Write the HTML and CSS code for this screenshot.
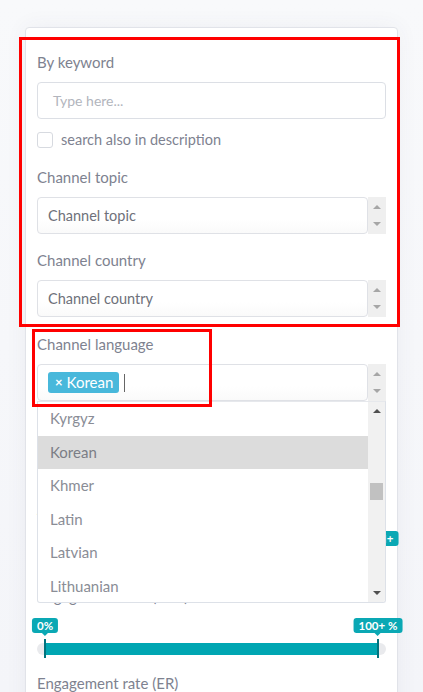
FILE: index.html
```html
<!DOCTYPE html>
<html lang="en">
<head>
<meta charset="utf-8">
<title>Channel filters</title>
<link rel="stylesheet" href="styles.css">
</head>
<body>
<div class="page">
  <div class="card">
    <div class="field kw">
      <div class="label">By keyword</div>
      <div class="input">Type here...</div>
      <div class="check"><span class="box"></span><span class="check-text">search also in description</span></div>
    </div>

    <div class="field">
      <div class="label">Channel topic</div>
      <div class="select">
        <div class="select-body">Channel topic</div>
        <div class="spin"><span class="arr up"></span><span class="arr down"></span></div>
      </div>
    </div>

    <div class="field">
      <div class="label">Channel country</div>
      <div class="select">
        <div class="select-body">Channel country</div>
        <div class="spin"><span class="arr up"></span><span class="arr down"></span></div>
      </div>
    </div>

    <div class="field lang">
      <div class="label">Channel language</div>
      <div class="select-wrap">
        <div class="select">
          <div class="select-body"><span class="tag"><span class="x">×</span> Korean</span><span class="caret"></span></div>
          <div class="spin"><span class="arr up"></span><span class="arr down"></span></div>
        </div>
        <div class="dropdown">
          <ul class="options">
            <li>Kyrgyz</li>
            <li class="active">Korean</li>
            <li>Khmer</li>
            <li>Latin</li>
            <li>Latvian</li>
            <li>Lithuanian</li>
          </ul>
          <div class="scrollbar">
            <span class="sarr sup"></span>
            <span class="thumb"></span>
            <span class="sarr sdown"></span>
          </div>
        </div>
      </div>
    </div>

    <div class="field">
      <div class="label">Channel category</div>
      <div class="select">
        <div class="select-body">Channel category</div>
        <div class="spin"><span class="arr up"></span><span class="arr down"></span></div>
      </div>
    </div>

    <div class="slider-sec">
      <div class="label">Average views</div>
      <div class="tips"><span class="tip" style="left:6%">1K</span><span class="tip" style="left:97.7%">10M+</span></div>
      <div class="track"><span class="fill" style="left:6%;right:2.3%"></span><span class="handle" style="left:6%"></span><span class="handle" style="left:97.7%"></span></div>
    </div>

    <div class="slider-sec">
      <div class="label">Engagement rate (ERV)</div>
      <div class="tips"><span class="tip" style="left:2.3%">0%</span><span class="tip" style="left:97.7%">100+ %</span></div>
      <div class="track"><span class="fill" style="left:2.3%;right:2.3%"></span><span class="handle" style="left:2.3%"></span><span class="handle" style="left:97.7%"></span></div>
    </div>

    <div class="slider-sec">
      <div class="label">Engagement rate (ER)</div>
    </div>
  </div>

  <div class="mark mark-a"></div>
  <div class="mark mark-b"></div>
</div>
</body>
</html>
```

FILE: styles.css
```css
* { box-sizing: border-box; }
html, body { margin: 0; padding: 0; }
body {
  background: #f4f5f9;
  font-family: "Lato", "Noto Sans", sans-serif;
  height: 692px;
  overflow: hidden;
}
.page {
  position: relative;
  padding: 27px 26px 0 25px;
  height: 692px;
  background: linear-gradient(180deg, #f8f9fb 0%, #f4f5f9 100%);
}
.card {
  width: 373px;
  background: #fff;
  border: 1px solid #e1e3e9;
  border-radius: 4px;
  padding: 24px 11px 40px 11px;
  box-shadow: 0 0 22px rgba(60, 70, 110, 0.06);
}
.label {
  font-size: 15px;
  line-height: 20px;
  height: 20px;
  color: #7e8290;
  margin-bottom: 10px;
  white-space: nowrap;
}
.field + .field { margin-top: 16px; }
.field.lang { margin-top: 17px; }
.kw { padding-bottom: 3px; }

.input {
  height: 37px;
  border: 1px solid #dcdfe5;
  border-radius: 4px;
  padding: 0 15px;
  font-size: 14px;
  line-height: 35px;
  color: #b2b5bd;
}
.check {
  margin-top: 13px;
  display: flex;
  align-items: center;
  gap: 8px;
  height: 16px;
}
.box {
  width: 16px;
  height: 16px;
  border: 1px solid #d7dae0;
  border-radius: 3px;
  background: #fff;
}
.check-text {
  font-size: 14.5px;
  color: #7e8290;
  line-height: 16px;
}

.select {
  display: flex;
  height: 37px;
}
.select-body {
  flex: 1;
  border: 1px solid #dfe1e6;
  border-radius: 4px;
  padding: 0 10px;
  font-size: 14.5px;
  line-height: 35px;
  color: #6e717a;
  display: flex;
  align-items: center;
  background: linear-gradient(180deg, #ffffff 60%, #fafafa 100%);
}
.spin {
  width: 18px;
  background: #efefef;
  display: flex;
  flex-direction: column;
  justify-content: space-between;
  align-items: center;
  padding: 8px 0 8px;
}
.arr {
  width: 0;
  height: 0;
  border-left: 4px solid transparent;
  border-right: 4px solid transparent;
}
.arr.up { border-bottom: 4px solid #a6a6a6; }
.arr.down { border-top: 4px solid #a6a6a6; }

.select-wrap { position: relative; }
.tag {
  display: inline-flex;
  align-items: center;
  height: 21px;
  padding: 0 6px 0 7px;
  background: #48b8db;
  color: #fff;
  border-radius: 3px;
  font-size: 15px;
  line-height: 21px;
  gap: 4px;
}
.tag .x { font-size: 13px; font-weight: 700; }
.caret {
  display: inline-block;
  width: 1px;
  height: 18px;
  background: #666;
  margin-left: 5px;
}

.dropdown {
  position: absolute;
  top: 37px;
  left: 0;
  right: 0;
  height: 202px;
  background: #fff;
  border: 1px solid #dde1e8;
  border-top: 1px solid #e6e8ec;
  border-radius: 0 0 3px 3px;
  display: flex;
  overflow: hidden;
  z-index: 5;
}
.options {
  list-style: none;
  margin: 0;
  padding: 0;
  flex: 1;
}
.options li {
  height: 33.6px;
  line-height: 33.6px;
  padding-left: 12px;
  font-size: 15px;
  color: #8a8d96;
}
.options li.active { background: #dcdcdc; color: #7b7e86; }
.scrollbar {
  width: 17px;
  background: #f1f1f1;
  position: relative;
}
.sarr {
  position: absolute;
  left: 5px;
  width: 0;
  height: 0;
  border-left: 4px solid transparent;
  border-right: 4px solid transparent;
}
.sup { top: 7px; border-bottom: 4px solid #505050; }
.sdown { bottom: 7px; border-top: 4px solid #505050; }
.thumb {
  position: absolute;
  left: 2px;
  right: 2px;
  top: 81px;
  height: 17px;
  background: #c1c1c1;
}

.slider-sec { margin-top: 15px; }
.slider-sec + .slider-sec { margin-top: 18px; }
.slider-sec .label { margin-bottom: 12px; }
.tips {
  position: relative;
  height: 15px;
  margin: 0 0 10px;
}
.tip {
  position: absolute;
  top: 0;
  transform: translateX(-50%);
  background: #0aa8b4;
  color: #fff;
  font-size: 11.5px;
  font-weight: 700;
  line-height: 15px;
  height: 15px;
  padding: 0 5px;
  border-radius: 3px;
  white-space: nowrap;
}
.tip::after {
  content: "";
  position: absolute;
  left: 50%;
  bottom: -3px;
  margin-left: -3px;
  border-left: 3px solid transparent;
  border-right: 3px solid transparent;
  border-top: 3px solid #0aa8b4;
}
.track {
  position: relative;
  height: 12px;
  background: #e9eaed;
  border-radius: 6px;
}
.fill {
  position: absolute;
  top: 0;
  bottom: 0;
  background: #00a6b2;
}
.handle {
  position: absolute;
  top: -4px;
  bottom: -3px;
  width: 2px;
  margin-left: -1px;
  background: #00737e;
}

.mark {
  position: absolute;
  border: 3px solid #ff0000;
  pointer-events: none;
  z-index: 10;
}
.mark-a { left: 19px; top: 37px; width: 381px; height: 290px; }
.mark-b { left: 32px; top: 329px; width: 180px; height: 78px; }
```
